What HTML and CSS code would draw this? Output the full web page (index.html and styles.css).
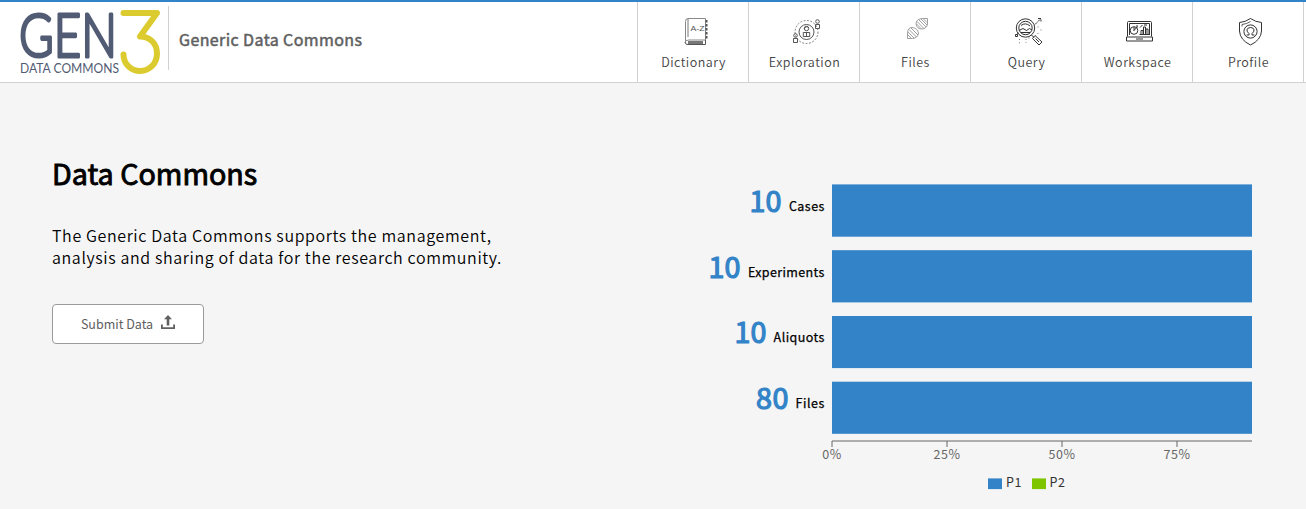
FILE: index.html
```html
<!DOCTYPE html>
<html lang="en">
<head>
<meta charset="utf-8">
<title>Generic Data Commons</title>
<link rel="stylesheet" href="styles.css">
</head>
<body>
<header class="top-bar">
  <div class="brand">
    <svg class="brand-logo" width="142" height="66" viewBox="0 0 142 66" role="img" aria-label="Gen3 Data Commons">
      <text class="logo-gen" x="-1" y="48" textLength="98" lengthAdjust="spacingAndGlyphs">GEN</text>
      <text class="logo-sub" x="0" y="64" textLength="99" lengthAdjust="spacingAndGlyphs">DATA COMMONS</text>
      <path class="logo-three" d="M103.500 4H137L120 27.500C130 27.500 137 34.500 137 44.500C137 54 130 62 120.200 62C110.500 62 103.500 54.500 103.500 45.500"/>
    </svg>
    <h1 class="brand-name">Generic Data Commons</h1>
  </div>
  <nav class="nav">
    <a class="nav-item">
      <svg class="nav-icon" viewBox="0 0 30 30">
        <path stroke="#888" d="M5.500 24V4.500Q5.500 1.500 8 1.500H25.500V23H8.500Q5 23.500 5 25.500"/>
        <path stroke-width=".8" d="M8 2V20"/>
        <path stroke-width="2" stroke-dasharray="2.500 1.500" d="M26.500 3V22"/>
        <path d="M5 25Q5.500 28 8 27.500H25.500V23"/>
        <path stroke-width="3" stroke="#777" d="M8 25.500H23"/>
        <text class="icon-text" x="10.500" y="14" textLength="14" lengthAdjust="spacingAndGlyphs">A-Z</text>
      </svg>
      <span class="nav-label">Dictionary</span>
    </a>
    <a class="nav-item">
      <svg class="nav-icon" viewBox="0 0 30 30">
        <circle cx="15.500" cy="15" r="11.500" stroke-dasharray="1.800 1.600" stroke-width=".8"/>
        <circle cx="15.500" cy="15" r="7.500"/>
        <circle cx="15.500" cy="11.500" r="2.200"/>
        <path d="M12.300 19.500V15.500H18.700V19.500ZM15.500 15V19.500M13 12Q15.500 8 18 11"/>
        <circle cx="26.500" cy="4.500" r="1.800"/><path d="M24.500 7.500H28.500V11.500H24.500Z"/>
        <circle cx="4.500" cy="18.500" r="1.800"/><path d="M2.500 21.500H6.500V25.500H2.500Z"/>
      </svg>
      <span class="nav-label">Exploration</span>
    </a>
    <a class="nav-item">
      <svg class="nav-icon nav-icon--soft" viewBox="0 0 30 30">
        <path d="M5.500 21.500V15.500Q6 10.500 10 10.500Q15.500 11 16.500 16Q16 21 10.500 21.500H5.500"/>
        <path d="M25.500 1.500H19.500Q14 2.500 14 7Q15 12 20 12Q25 11.500 25.500 7Z"/>
        <path d="M6 15L12 21M7 12.500L14.500 20M9 11L16 18M6 18L9 21M15 4.500L22 11.500M17 3L24 10M19 2L25 8M14.500 7L19 11.500M21.500 2L25 5.500"/>
      </svg>
      <span class="nav-label">Files</span>
    </a>
    <a class="nav-item">
      <svg class="nav-icon nav-icon--strong" viewBox="0 0 30 30">
        <circle cx="12.500" cy="11" r="9.200"/>
        <circle cx="12.500" cy="11" r="6.700"/>
        <path d="M6 13.500L10 11.500L13.500 13.500L16.500 11.500L19 13M8 8.500Q12.500 5 17 9M8 15.500H17"/>
        <path d="M18.500 18L21 20.500M19.500 21.500L22 18.500L29 25L26 28ZM22.500 21.500L26 25M3.500 17.500L5.500 16M2.500 17.500V19.500H4.500V17.500Z"/>
        <path stroke-dasharray="3 1" d="M22 7.500L28 1.500M25 1.500H28V4.500"/>
        <path stroke="#777" stroke-dasharray="1 2.300" d="M25 9.500V12M28 12.500V14M24.500 16.500H26M6.500 22V28M13 22V26M16 20.500V23"/>
      </svg>
      <span class="nav-label">Query</span>
    </a>
    <a class="nav-item">
      <svg class="nav-icon nav-icon--strong" viewBox="0 0 30 30">
        <path d="M3.500 19.500V5.500Q3.500 4.500 4.500 4.500H26.500Q27.500 4.500 27.500 5.500V19.500"/>
        <path d="M5.500 18V6.500H25.500V18M2.500 20H28.500V24H2.500ZM12 22H19"/>
        <circle cx="10" cy="13.500" r="3.800"/>
        <path d="M10 14V10M10 13.500L13.500 9.500M13 8V10.500M17 17.500V13.500H19V17.500M19.500 17.500V10H21.500V17.500M22 17.500V12H24V17.500M16 10.500L18.500 8M20 8H23M15.500 17.500H25"/>
      </svg>
      <span class="nav-label">Workspace</span>
    </a>
    <a class="nav-item">
      <svg class="nav-icon nav-icon--strong" viewBox="0 0 30 30">
        <path d="M15.500 1.500Q20.500 5 26.500 5.500V14Q26 23 15.500 28Q5 23 4.500 14V5.500Q10.500 5 15.500 1.500Z"/>
        <path stroke-width=".8" d="M7 9.500V7.500Q12 7 15.500 4.500"/>
        <circle cx="15.500" cy="14.500" r="6.600"/>
        <path d="M11.500 18H14V16.500Q11.800 15 12 12.800Q12.500 10.500 15.500 10.500Q18.500 10.500 19 12.800Q19.200 15 17 16.500V18H19.500"/>
      </svg>
      <span class="nav-label">Profile</span>
    </a>
  </nav>
</header>

<main class="home">
  <section class="intro">
    <h2 class="intro-title">Data Commons</h2>
    <p class="intro-text">The Generic Data Commons supports the management,<br>analysis and sharing of data for the research community.</p>
    <button class="submit-button" type="button">
      <span class="submit-label">Submit Data</span>
      <svg class="submit-icon" width="14" height="15" viewBox="0 0 14 15">
        <path d="M7 0L11 4.300H8.300V10.500H5.700V4.300H3Z"/>
        <path d="M0 9.500H1.800V12.200H12.200V9.500H14V14H0Z"/>
      </svg>
    </button>
  </section>

  <svg class="chart" width="606" height="350" viewBox="700 150 606 350">
    <g class="bars">
      <rect x="832" y="184.400" width="420" height="52.300"/>
      <rect x="832" y="250.200" width="420" height="52.200"/>
      <rect x="832" y="316" width="420" height="52.100"/>
      <rect x="832" y="381.700" width="420" height="52.100"/>
    </g>
    <g class="counts">
      <text x="749.500" y="211.500" textLength="32">10</text>
      <text x="708.500" y="277.500" textLength="32">10</text>
      <text x="734.500" y="342.500" textLength="32">10</text>
      <text x="756" y="408.500" textLength="32.500">80</text>
    </g>
    <g class="names">
      <text x="788.900" y="211" textLength="35.500">Cases</text>
      <text x="747.900" y="277" textLength="76.500">Experiments</text>
      <text x="773.600" y="342" textLength="50.800">Aliquots</text>
      <text x="795.600" y="408" textLength="28.800">Files</text>
    </g>
    <path class="axis" d="M832 441H1252M832 441V447M947 441V447M1062 441V447M1177 441V447"/>
    <g class="ticks">
      <text x="831.800" y="459" textLength="19">0%</text>
      <text x="946.800" y="459" textLength="26.500">25%</text>
      <text x="1061.800" y="459" textLength="26.500">50%</text>
      <text x="1176.800" y="459" textLength="26.500">75%</text>
    </g>
    <rect class="key-p1" x="988" y="478.400" width="14" height="10.700"/>
    <rect class="key-p2" x="1032" y="478.400" width="14" height="10.700"/>
    <g class="keys">
      <text x="1006" y="487" textLength="15.500">P1</text>
      <text x="1049.500" y="487" textLength="15.500">P2</text>
    </g>
  </svg>
</main>
</body>
</html>
```
FILE: styles.css
```css
* {
  box-sizing: border-box;
}

body {
  margin: 0;
  height: 509px;
  overflow: hidden;
  background: #f5f5f5;
  color: #000;
  font-family: "Noto Sans CJK SC", "Noto Sans", sans-serif;
}

.top-bar {
  display: flex;
  justify-content: space-between;
  height: 83px;
  padding-right: 2px;
  background: #fff;
  border-top: 2px solid #3283c8;
  border-bottom: 1px solid #d1d1d1;
}

.brand {
  display: flex;
  align-items: flex-start;
  padding: 4px 0 0 20px;
}

.brand-logo {
  display: block;
  margin-top: 3px;
  overflow: visible;
}

.logo-gen {
  font: 300 62px Lato, sans-serif;
  fill: #525b74;
  stroke: #525b74;
  stroke-width: 3.2;
  stroke-linejoin: round;
}

.logo-sub {
  font: 400 12.5px Lato, sans-serif;
  fill: #525b74;
}

.logo-three {
  fill: none;
  stroke: #dccb2f;
  stroke-width: 6;
  stroke-linecap: round;
  stroke-linejoin: round;
}

.brand-name {
  height: 64px;
  margin: 0 0 0 6px;
  padding: 0 0 0 10px;
  border-left: 1px solid #d1d1d1;
  color: #606060;
  font-size: 16px;
  font-weight: 400;
  letter-spacing: 0.4px;
  line-height: 67px;
  -webkit-text-stroke: 0.5px #606060;
}

.nav {
  display: flex;
  border-right: 1px solid #d1d1d1;
}

.nav-item {
  display: flex;
  flex-direction: column;
  align-items: center;
  width: 111px;
  padding-top: 15px;
  border-left: 1px solid #d1d1d1;
}

.nav-icon {
  width: 30px;
  height: 30px;
  margin-left: 4px;
  fill: none;
  stroke: #555;
  stroke-width: 1;
}

.nav-icon--soft {
  stroke: #888;
  stroke-width: 0.8;
}

.nav-icon--strong {
  stroke: #333;
}

.icon-text {
  font: 7.5px "Liberation Sans", sans-serif;
  fill: #555;
  stroke: none;
}

.nav-label {
  margin-top: 5px;
  padding-left: 1px;
  color: #444;
  font-size: 12.5px;
  font-weight: 350;
  letter-spacing: 0.5px;
  line-height: 20px;
}

.home {
  display: flex;
  justify-content: space-between;
  padding-top: 67px;
}

.intro {
  padding-left: 52px;
}

.intro-title {
  margin: 3px 0 0;
  font-size: 28.7px;
  font-weight: 400;
  line-height: 40px;
  -webkit-text-stroke: 0.9px #000;
}

.intro-text {
  margin: 31px 0 0;
  font-size: 16px;
  font-weight: 350;
  letter-spacing: 0.62px;
  line-height: 22px;
  white-space: nowrap;
}

.submit-button {
  display: flex;
  align-items: center;
  justify-content: center;
  gap: 8px;
  width: 152px;
  height: 40px;
  margin-top: 36px;
  padding: 0;
  background: #fff;
  border: 1px solid #9b9b9b;
  border-radius: 4px;
  color: #606060;
  font-family: inherit;
  font-size: 12.5px;
}

.submit-label {
  margin-top: -2px;
}

.submit-icon {
  margin-top: -3px;
  fill: #606060;
}

.chart {
  display: block;
}

.bars,
.key-p1 {
  fill: #3283c8;
}

.key-p2 {
  fill: #7ec500;
}

.counts {
  fill: #3283c8;
  stroke: #3283c8;
  stroke-width: 1.2;
  font-size: 28.7px;
}

.names {
  fill: #000;
  stroke: #000;
  stroke-width: 0.25;
  font-size: 12.5px;
}

.axis {
  fill: none;
  stroke: #666;
}

.ticks {
  fill: #666;
  font-size: 12.5px;
  text-anchor: middle;
}

.keys {
  fill: #333;
  font-size: 12.5px;
}
```
